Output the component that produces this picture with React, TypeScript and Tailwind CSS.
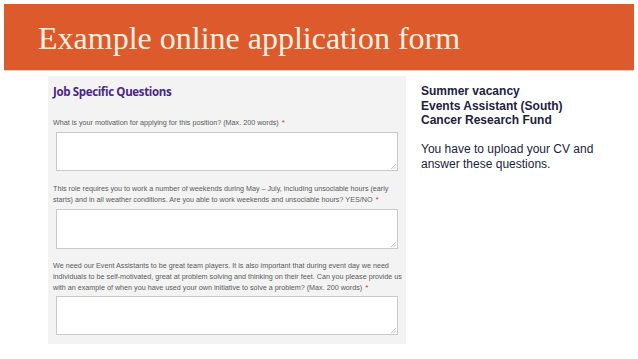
import React from "react";

const Req = () => <span className="text-[#d9302c] text-[8px] ml-[1px]">*</span>;

const Area = ({ h = 39 }: { h?: number }) => (
  <div className="relative mx-[8px] bg-white border border-[#c9c9c9]" style={{ height: h }}>
    <svg className="absolute right-[1px] bottom-[1px]" width="5" height="5" viewBox="0 0 5 5">
      <path d="M5 0 L0 5 M5 2.5 L2.5 5" stroke="#bdbdbd" strokeWidth="0.8" />
    </svg>
  </div>
);

export default function App() {
  return (
    <div className="w-[638px] h-[359px] bg-white overflow-hidden">
      <div className="mx-[4px] mt-[4px] h-[67px] bg-[#dc5a2c] flex items-center pl-[34px] border-b border-[#f6c7b0]">
        <h1
          className="text-[#fdf1e2] text-[32px] leading-none pt-[1px]"
          style={{ fontFamily: '"Liberation Serif", serif' }}
        >
          Example online application form
        </h1>
      </div>
      <div className="flex mt-[5px]">
        <div
          className="ml-[48px] w-[358px] h-[268px] bg-[#f3f3f3] pt-[8px] text-[#5a5a5a]"
          style={{ fontFamily: '"Liberation Sans", Arial, sans-serif' }}
        >
          <div
            className="ml-[5px] text-[#4a2789] text-[11.5px] font-bold leading-[16px]"
            style={{ fontFamily: '"Open Sans", sans-serif', letterSpacing: "-0.35px" }}
          >
            Job Specific Questions
          </div>
          <div className="ml-[5px] mt-[17px] text-[7.2px] leading-[11px]">
            What is your motivation for applying for this position? (Max. 200 words) <Req />
          </div>
          <div className="mt-[4px]"><Area /></div>
          <div className="ml-[5px] mr-[8px] mt-[12px] text-[7.2px] leading-[11px]">
            This role requires you to work a number of weekends during May – July, including unsociable hours (early starts) and in all weather conditions. Are you able to work weekends and unsociable hours? YES/NO <Req />
          </div>
          <div className="mt-[4px]"><Area h={40} /></div>
          <div className="ml-[5px] mr-[4px] mt-[11px] text-[7.2px] leading-[11px]">
            We need our Event Assistants to be great team players. It is also important that during event day we need individuals to be self-motivated, great at problem solving and thinking on their feet. Can you please provide us with an example of when you have used your own initiative to solve a problem? (Max. 200 words) <Req />
          </div>
          <div className="mt-[3px]"><Area /></div>
        </div>
        <div
          className="ml-[15px] pt-[8px] text-[#1b2340] text-[12px] leading-[14.5px]"
          style={{ fontFamily: '"Liberation Sans", Arial, sans-serif' }}
        >
          <div className="font-bold">Summer vacancy</div>
          <div className="font-bold">Events Assistant (South)</div>
          <div className="font-bold">Cancer Research Fund</div>
          <div className="mt-[14.5px]">You have to upload your CV and</div>
          <div>answer these questions.</div>
        </div>
      </div>
    </div>
  );
}
